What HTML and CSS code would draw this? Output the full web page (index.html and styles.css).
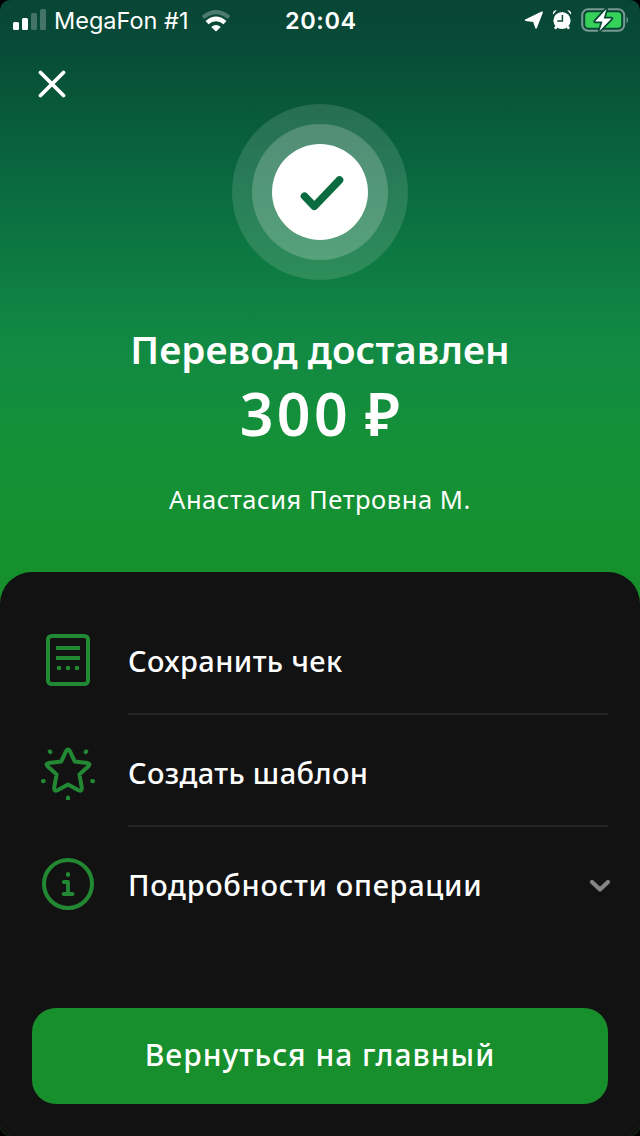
FILE: index.html
```html
<!DOCTYPE html>
<html lang="ru">
<head>
<meta charset="utf-8">
<title>Перевод доставлен</title>
<link rel="stylesheet" href="styles.css">
</head>
<body>
<div class="screen">
  <header class="status">
    <svg class="signal" width="34" height="22" viewBox="0 0 34 22" fill="#fff">
      <rect x="1" y="13" width="6" height="8" rx="1.5"/>
      <rect x="10" y="9" width="6" height="12" rx="1.5"/>
      <g opacity=".24"><rect x="19" y="4" width="6" height="17" rx="1.5"/><rect x="28" y="0" width="6" height="21" rx="1.5"/></g>
    </svg>
    <span class="carrier">MegaFon #1</span>
    <svg class="wifi" width="30" height="22" viewBox="0 0 30 22" fill="none" stroke="#fff">
      <path d="M2 7.5Q15-3.2 28 7.5" stroke-width="4" opacity=".28"/>
      <path d="M6 12.7Q15 5 24 12.7" stroke-width="4.4"/>
      <path d="M10.2 17Q15 13 19.8 17L15 21.6Z" fill="#fff" stroke="none"/>
    </svg>
    <span class="time">20:04</span>
    <div class="indicators">
      <svg width="20" height="20" viewBox="0 0 20 20"><path d="M1.2 9.4 17.6 1.6Q19.2 1.2 18.8 2.7L12.9 18.1Q12 19.6 11.2 18.1L9.2 11.9 1.5 10.9Q.1 10.3 1.2 9.4Z" fill="#fff"/></svg>
      <svg width="20" height="22" viewBox="0 0 20 22">
        <path d="M4.6 17.5 3 19.8M15.4 17.5l1.6 2.3" stroke="#fff" stroke-width="2.6"/>
        <circle cx="10" cy="11.5" r="8.6" fill="#fff"/>
        <path d="M1 5.8Q.2 1.6 4.8 1.1ZM19 5.8Q19.8 1.6 15.2 1.1Z" fill="#fff"/>
        <path d="M10.4 6v6H5.3" fill="none" stroke="#084836" stroke-width="1.5"/>
      </svg>
      <svg width="50" height="26" viewBox="0 0 50 26">
        <rect x="2.2" y="2.2" width="42" height="21.6" rx="6" fill="none" stroke="#fff" stroke-opacity=".45" stroke-width="2"/>
        <rect x="5.2" y="5.2" width="36" height="15.6" rx="3.5" fill="#35d158"/>
        <path d="M46.6 9.5Q49.4 13 46.6 16.5Z" fill="#fff" opacity=".5"/>
        <path d="M26.5 2 15 14.5h7.5L19.5 24 31.5 11.5h-7.8Z" fill="#fff" stroke="#084836" stroke-width="3.4" stroke-linejoin="round" paint-order="stroke"/>
      </svg>
    </div>
  </header>

  <main class="result">
    <button class="close" aria-label="Закрыть">
      <svg width="28" height="28" viewBox="0 0 28 28"><path d="M2.5 2.5l23 23M25.5 2.5l-23 23" stroke="#fff" stroke-width="3.8" stroke-linecap="round"/></svg>
    </button>
    <svg class="badge" width="176" height="176" viewBox="0 0 176 176">
      <circle cx="88" cy="88" r="88" fill="#fff" fill-opacity=".13"/>
      <circle cx="88" cy="88" r="68" fill="#fff" fill-opacity=".2"/>
      <circle cx="88" cy="88" r="48" fill="#fff"/>
      <path d="M72.5 92.2 82.3 102.3 107.5 76" fill="none" stroke="#0a6b40" stroke-width="7.6" stroke-linecap="round" stroke-linejoin="round"/>
    </svg>
    <h1 class="title"><span>Перевод доставлен</span></h1>
    <div class="amount"><span>300 ₽</span></div>
    <div class="recipient"><span>Анастасия Петровна М.</span></div>
  </main>

  <section class="sheet">
    <ul class="actions">
      <li class="action">
        <svg class="icon" width="56" height="56" viewBox="0 0 56 56" fill="none" stroke="#238833" stroke-width="4">
          <rect x="8" y="4" width="40" height="48" rx="3.5"/>
          <path d="M16 16h24M16 26h24"/>
          <g fill="#238833" stroke="none"><circle cx="19" cy="36" r="2.3"/><circle cx="28" cy="36" r="2.3"/><circle cx="37" cy="36" r="2.3"/></g>
        </svg>
        <div class="label"><span class="save">Сохранить чек</span></div>
      </li>
      <li class="action">
        <svg class="icon" width="56" height="56" viewBox="0 0 56 56" fill="none" stroke="#238833" stroke-width="4" stroke-linecap="round" stroke-linejoin="round">
          <path d="M26.2 6.8Q28 4 29.8 6.8L34.7 17.4 47.2 18.9Q51 19.7 48.4 22.2L39.4 30.4 41.8 43.6Q42 47.8 38.5 46.2L28 40.6 17.5 46.2Q14 47.8 14.2 43.6L16.6 30.4 7.6 22.2Q5 19.7 8.8 18.9L21.3 17.4Z"/>
          <path d="M9.8 7.4l.6.7M46.2 7.4l-.6.7M3 37.2l.8-.2M53 37.2l-.8-.2M28 55v-1.5"/>
        </svg>
        <div class="label"><span class="template">Создать шаблон</span></div>
      </li>
      <li class="action">
        <svg class="icon" width="56" height="56" viewBox="0 0 56 56" fill="none" stroke="#238833" stroke-width="4">
          <circle cx="28" cy="28" r="24"/>
          <path d="M23.8 26H28v12M23.6 38h9" stroke-linecap="round" stroke-linejoin="round" stroke-width="3.8"/>
          <path d="M28 18v1" stroke-linecap="round"/>
        </svg>
        <div class="label"><span class="details">Подробности операции</span>
          <svg class="chevron" width="22" height="14" viewBox="0 0 22 14"><path d="M3 3l8 7.5L19 3" fill="none" stroke="#858585" stroke-width="4.2" stroke-linecap="round" stroke-linejoin="round"/></svg>
        </div>
      </li>
    </ul>
    <button class="home"><span>Вернуться на главный</span></button>
  </section>
</div>
</body>
</html>
```
FILE: styles.css
```css
* { box-sizing: border-box; }
body { margin: 0; background: #000; }
.screen {
  width: 640px; height: 1136px; overflow: hidden;
  display: flex; flex-direction: column;
  border-radius: 10px;
  color: #fff;
  font-family: "Noto Sans", "Open Sans", sans-serif;
  background: linear-gradient(#084535 0, #084a37 40px, #08573a 100px, #0a6b40 190px, #0f7f43 290px, #128a43 350px, #149038 440px, #16902c 580px);
}
button { border: 0; padding: 0; background: none; color: inherit; font: inherit; }
svg { display: block; flex: none; }
span { white-space: nowrap; }

.status {
  height: 40px; padding: 0 12px;
  display: grid; grid-template-columns: 42px 147px 84px 1fr auto; align-items: center;
  font-family: Inter, sans-serif;
}
.signal { margin-top: -1px; }
.wifi { margin-top: 1px; }
.carrier { font-size: 23.5px; letter-spacing: 0; padding-top: 1px; }
.time { font-size: 23.5px; font-weight: 600; letter-spacing: .6px; padding-top: 1px; }
.indicators { display: flex; align-items: center; gap: 8px; margin-right: -2px; }

.result { height: 532px; display: flex; flex-direction: column; align-items: center; }
.close { align-self: flex-start; margin: 30px 0 0 38px; height: 28px; }
.badge { margin-top: 6px; }
.title { margin: 43px 0 0; font-size: 38.5px; line-height: 52px; font-weight: 600; letter-spacing: .1px; }
.amount { padding-left: 3px; font-size: 59px; line-height: 76px; font-weight: 600; letter-spacing: 3.4px; word-spacing: -5px; }
.recipient { margin-top: 30px; font-size: 25.5px; line-height: 36px; letter-spacing: .55px; }

.sheet { flex: 1; background: #121212; border-radius: 32px 32px 0 0; padding: 32px 32px 0; display: flex; flex-direction: column; }
.actions { list-style: none; margin: 0; padding: 0; }
.action { height: 112px; display: flex; align-items: center; padding-left: 8px; }
.label {
  flex: 1; height: 112px; margin: -2px 0 0 32px; padding-top: 4px; font-size: 29px; font-weight: 500;
  display: flex; align-items: center; justify-content: space-between;
  border-bottom: 2px solid #262626;
}
.action:last-child .label { border-bottom-color: transparent; }
.save { letter-spacing: .4px; }
.template { letter-spacing: .35px; }
.details { letter-spacing: .7px; }
.chevron { margin: 4px -3px 0 0; }
.home { height: 96px; margin-top: 68px; border-radius: 24px; background: #178f2c; font-size: 30px; font-weight: 500; letter-spacing: 1px; line-height: 40px; padding-bottom: 2px; }
```
